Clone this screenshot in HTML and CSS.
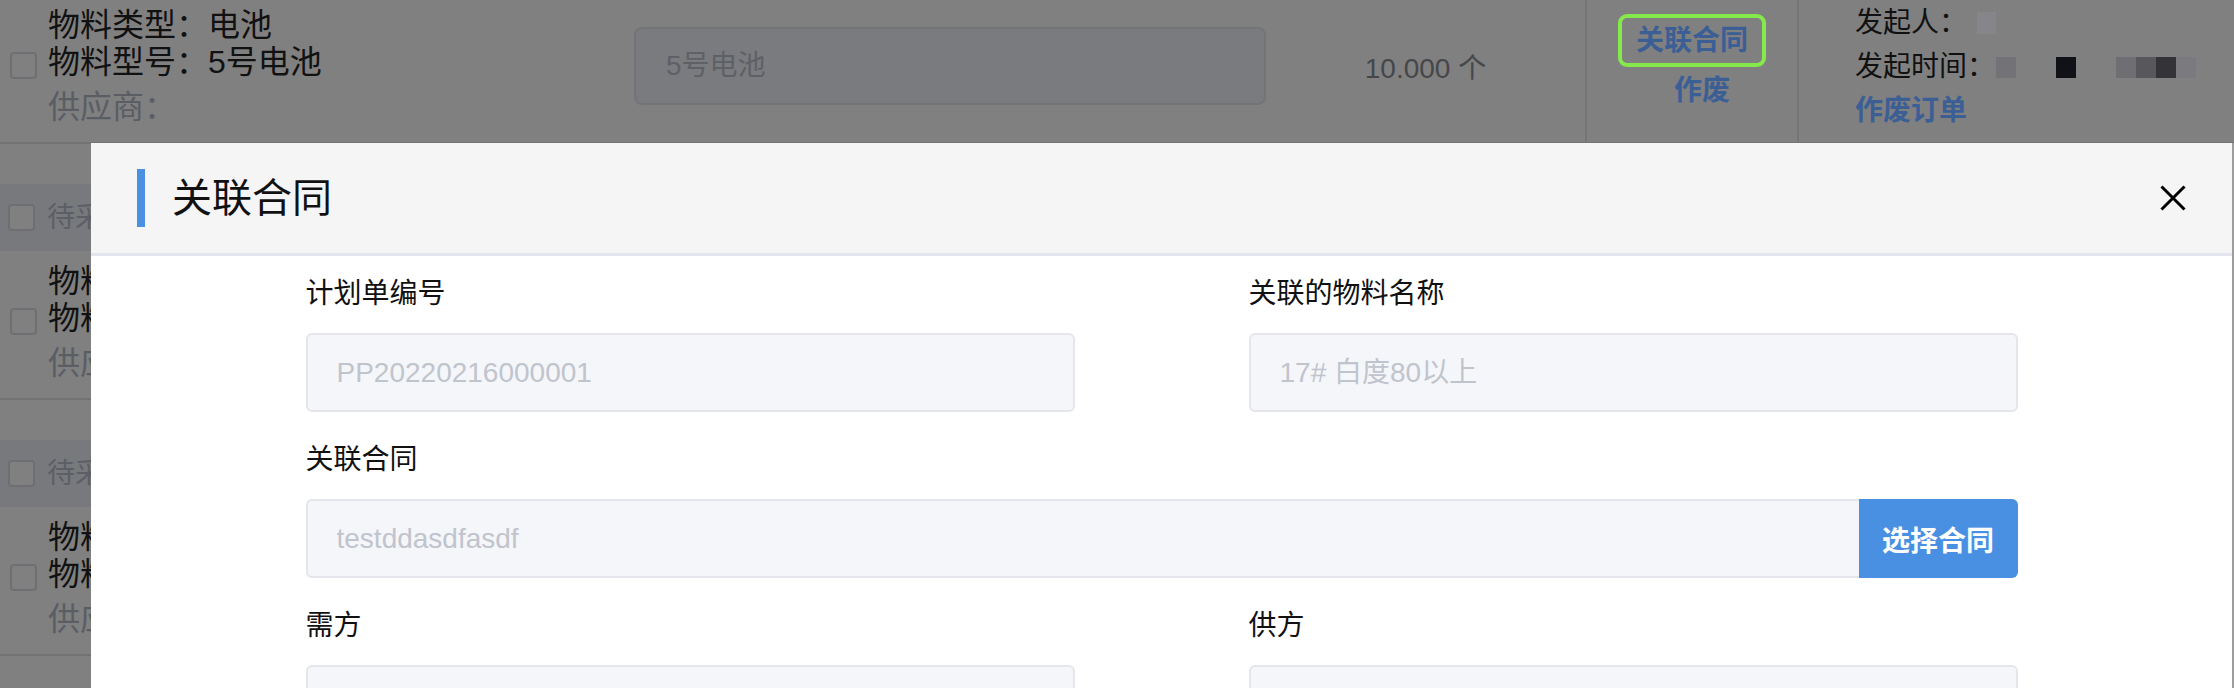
FILE: index.html
```html
<!DOCTYPE html>
<html lang="zh-CN">
<head>
<meta charset="utf-8">
<title>关联合同</title>
<link rel="stylesheet" href="styles.css">
</head>
<body>
<div class="page">
  <section class="group">
    <div class="band"><span class="chk"></span><span class="band-text">待采购</span></div>
    <div class="item">
      <div class="cell-chk"><span class="chk"></span></div>
      <div class="info">
        <div class="info-line">物料类型：电池</div>
        <div class="info-line">物料型号：5号电池</div>
        <div class="info-sub">供应商：</div>
      </div>
      <div class="spec"><div class="spec-input">5号电池</div></div>
      <div class="qty">10.000 个</div>
      <div class="actions"><a class="act act-hl">关联合同</a><a class="act act-void">作废</a></div>
      <div class="meta">
        <div class="meta-line">发起人：<span class="blk blk-faint"></span></div>
        <div class="meta-line">发起时间：<span class="mosaic"><span class="blk b1"></span><span class="blk b0"></span><span class="blk b2"></span><span class="blk b0"></span><span class="blk b3"></span><span class="blk b4"></span><span class="blk b5"></span><span class="blk b6"></span></span></div>
        <a class="meta-link">作废订单</a>
      </div>
    </div>
  </section>
  <section class="group">
    <div class="band"><span class="chk"></span><span class="band-text">待采购</span></div>
    <div class="item">
      <div class="cell-chk"><span class="chk"></span></div>
      <div class="info">
        <div class="info-line">物料类型：纸浆</div>
        <div class="info-line">物料型号：17#</div>
        <div class="info-sub">供应商：</div>
      </div>
      <div class="spec"><div class="spec-input"></div></div>
      <div class="qty"></div>
      <div class="actions"></div>
      <div class="meta"></div>
    </div>
  </section>
  <section class="group">
    <div class="band"><span class="chk"></span><span class="band-text">待采购</span></div>
    <div class="item">
      <div class="cell-chk"><span class="chk"></span></div>
      <div class="info">
        <div class="info-line">物料类型：电池</div>
        <div class="info-line">物料型号：7号电池</div>
        <div class="info-sub">供应商：</div>
      </div>
      <div class="spec"><div class="spec-input"></div></div>
      <div class="qty"></div>
      <div class="actions"></div>
      <div class="meta"></div>
    </div>
  </section>
</div>

<div class="modal" role="dialog" aria-label="关联合同">
  <header class="modal-head">
    <span class="head-bar"></span>
    <h2 class="modal-title">关联合同</h2>
    <button class="modal-close" aria-label="关闭">
      <svg viewBox="0 0 26 26" width="26" height="26"><path d="M1.5 1.5 L24.5 24.5 M24.5 1.5 L1.5 24.5" stroke="#000" stroke-width="3" fill="none"/></svg>
    </button>
  </header>
  <div class="modal-body">
    <div class="form-grid">
      <div class="field">
        <label class="field-label">计划单编号</label>
        <input class="field-input" placeholder="PP20220216000001" readonly>
      </div>
      <div class="field">
        <label class="field-label">关联的物料名称</label>
        <input class="field-input" placeholder="17# 白度80以上" readonly>
      </div>
      <div class="field field-wide">
        <label class="field-label">关联合同</label>
        <div class="input-group">
          <input class="field-input group-input" placeholder="testddasdfasdf" readonly>
          <button class="btn-pick">选择合同</button>
        </div>
      </div>
      <div class="field">
        <label class="field-label">需方</label>
        <input class="field-input" readonly>
      </div>
      <div class="field">
        <label class="field-label">供方</label>
        <input class="field-input" readonly>
      </div>
    </div>
  </div>
</div>
</body>
</html>
```

FILE: styles.css
```css
* { box-sizing: border-box; margin: 0; padding: 0; }
html, body { width: 2234px; height: 688px; overflow: hidden; }
body {
  position: relative;
  background: #808080;
  color: #111;
  font-family: "Liberation Sans", "Noto Sans CJK SC", sans-serif;
}

/* dimmed page underneath */
.page { margin-top: -72px; }
.group { margin-bottom: 40px; }
.band {
  height: 67px;
  background: #77797c;
  display: flex;
  align-items: center;
  gap: 12px;
  padding-left: 8px;
}
.band-text { font-size: 28px; line-height: 36px; color: #5c5f65; }
.chk {
  display: block;
  flex: none;
  width: 27px;
  height: 27px;
  border: 2px solid #6e6f72;
  border-radius: 4px;
  background: #808080;
}
.item {
  height: 149px;
  display: flex;
  align-items: center;
  padding-bottom: 6px;
  border-bottom: 2px solid #737373;
}
.cell-chk { width: 48px; padding-left: 10px; flex: none; }
.info {
  width: 586px;
  flex: none;
  align-self: flex-start;
  padding-top: 12px;
  font-size: 32px;
  line-height: 37px;
}
.info-sub { margin-top: 8px; color: #5a5d64; }
.spec { width: 632px; flex: none; }
.spec-input {
  height: 78px;
  border: 2px solid #737478;
  border-radius: 8px;
  background: #7a7b7e;
  color: #5e6066;
  font-size: 28px;
  line-height: 74px;
  padding-left: 30px;
}
.qty { width: 319px; flex: none; text-align: center; font-size: 28px; color: #45474b; }
.actions {
  width: 214px;
  flex: none;
  align-self: stretch;
  margin-bottom: -6px;
  border-left: 2px solid #757575;
  border-right: 2px solid #757575;
  display: flex;
  flex-direction: column;
  align-items: center;
  padding-top: 19px;
}
.act { font-size: 28px; font-weight: bold; color: #3b5f95; line-height: 36px; }
.act-hl {
  border: 4px solid #85e84b;
  border-radius: 9px;
  padding: 0 14px;
  line-height: 45px;
}
.act-void { margin-top: 6px; padding-left: 20px; }
.meta {
  flex: 1;
  align-self: flex-start;
  padding-top: 6px;
  padding-left: 56px;
  font-size: 28px;
  line-height: 44px;
}
.meta-line { display: flex; align-items: center; }
.meta-link { display: block; font-weight: bold; color: #3b5f95; }
.blk { display: inline-block; width: 20px; height: 21px; }
.blk-faint { width: 19px; height: 22px; margin-left: 10px; background: #86868a; }
.mosaic { display: flex; margin-left: 1px; }
.b0 { width: 40px; }
.b1 { background: #737377; }
.b2 { background: #111118; }
.b3 { background: #6e6e73; }
.b4 { background: #58585c; }
.b5 { background: #333338; }
.b6 { background: #7b7b7f; }

/* modal */
.modal {
  position: absolute;
  left: 91px;
  top: 143px;
  width: 2143px;
  height: 720px;
  background: #fff;
  border-right: 2px solid #9d9d9d;
}
.modal-head {
  height: 113px;
  background: #f5f5f5;
  border-bottom: 3px solid #e3e6ec;
  display: flex;
  align-items: center;
  padding: 0 46px;
}
.head-bar { width: 8px; height: 58px; background: #4a90e2; flex: none; }
.modal-title {
  margin-left: 27px;
  font-size: 40px;
  font-weight: normal;
  line-height: 56px;
  color: #111;
}
.modal-close {
  margin-left: auto;
  width: 26px;
  height: 26px;
  border: 0;
  background: none;
  display: block;
}
.modal-close svg { display: block; }
.modal-body { padding-top: 18px; }
.form-grid {
  width: 1712px;
  margin: 0 auto;
  display: grid;
  grid-template-columns: 769px 769px;
  column-gap: 174px;
}
.field { display: flex; flex-direction: column; margin-bottom: 28px; }
.field-wide { grid-column: 1 / -1; }
.field-label {
  font-size: 28px;
  line-height: 40px;
  margin-bottom: 19px;
  color: #111;
}
.field-input {
  width: 100%;
  height: 79px;
  border: 2px solid #e4e6eb;
  border-radius: 6px;
  background: #f5f6fa;
  font-family: inherit;
  font-size: 28px;
  color: #606266;
  padding: 0 29px;
  outline: none;
}
.field-input::placeholder { color: #c0c4cc; }
.input-group { display: flex; width: 1712px; }
.group-input {
  width: 1553px;
  min-width: 0;
  flex: none;
  border-right: 0;
  border-radius: 6px 0 0 6px;
}
.btn-pick {
  width: 159px;
  height: 79px;
  flex: none;
  border: 0;
  border-radius: 0 6px 6px 0;
  background: #4a90e2;
  color: #fff;
  font-family: inherit;
  font-size: 28px;
  font-weight: bold;
}
```
